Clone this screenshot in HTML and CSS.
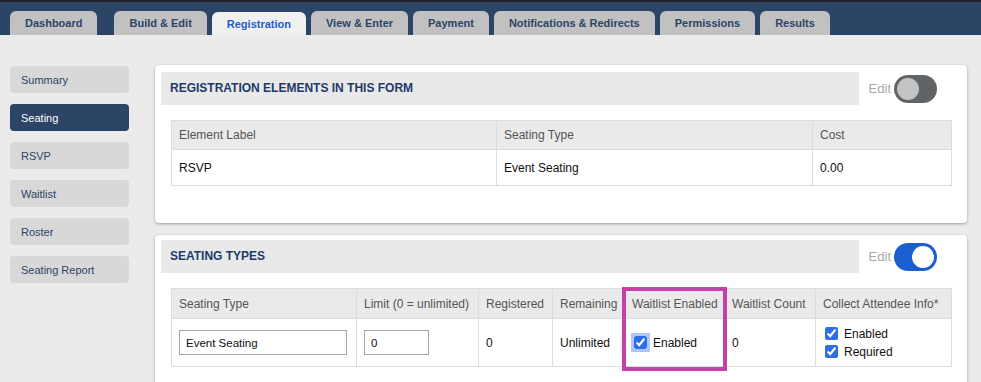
FILE: index.html
```html
<!DOCTYPE html>
<html lang="en">
<head>
    <meta charset="UTF-8">
    <meta name="viewport" content="width=device-width, initial-scale=1.0">
    <title>Registration - Seating</title>
    <link rel="stylesheet" href="styles.css">
</head>
<body>
    <div class="topbar">
        <span class="tab first">Dashboard</span>
        <span class="tab">Build &amp; Edit</span>
        <span class="tab active">Registration</span>
        <span class="tab">View &amp; Enter</span>
        <span class="tab">Payment</span>
        <span class="tab">Notifications &amp; Redirects</span>
        <span class="tab">Permissions</span>
        <span class="tab">Results</span>
    </div>

    <div class="main">
        <div class="side_nav">
            <a class="side_item" href="javascript:;">Summary</a>
            <a class="side_item active" href="javascript:;">Seating</a>
            <a class="side_item" href="javascript:;">RSVP</a>
            <a class="side_item" href="javascript:;">Waitlist</a>
            <a class="side_item" href="javascript:;">Roster</a>
            <a class="side_item" href="javascript:;">Seating Report</a>
        </div>

        <div class="content">
            <!-- 表单里的报名元素 -->
            <div class="card">
                <div class="card_head">
                    <div class="card_title">REGISTRATION ELEMENTS IN THIS FORM</div>
                    <span class="edit">Edit</span>
                    <span class="toggle"><span class="knob"></span></span>
                </div>
                <div class="card_body">
                    <table class="grid elements">
                        <colgroup>
                            <col style="width: 325px">
                            <col style="width: 316px">
                            <col style="width: 139px">
                        </colgroup>
                        <tr>
                            <th>Element Label</th>
                            <th>Seating Type</th>
                            <th>Cost</th>
                        </tr>
                        <tr>
                            <td>RSVP</td>
                            <td>Event Seating</td>
                            <td>0.00</td>
                        </tr>
                    </table>
                </div>
            </div>

            <!-- 座位类型 -->
            <div class="card">
                <div class="card_head tight">
                    <div class="card_title">SEATING TYPES</div>
                    <span class="edit">Edit</span>
                    <span class="toggle on"><span class="knob"></span></span>
                </div>
                <div class="card_body">
                    <div class="table_wrap">
                        <table class="grid seating">
                            <colgroup>
                                <col style="width: 185px">
                                <col style="width: 122px">
                                <col style="width: 74px">
                                <col style="width: 72px">
                                <col style="width: 100px">
                                <col style="width: 91px">
                                <col style="width: 136px">
                            </colgroup>
                            <tr>
                                <th>Seating Type</th>
                                <th>Limit (0 = unlimited)</th>
                                <th>Registered</th>
                                <th>Remaining</th>
                                <th>Waitlist Enabled</th>
                                <th>Waitlist Count</th>
                                <th>Collect Attendee Info*</th>
                            </tr>
                            <tr>
                                <td><input class="text_input name" type="text" value="Event Seating"></td>
                                <td><input class="text_input limit" type="text" value="0"></td>
                                <td>0</td>
                                <td>Unlimited</td>
                                <td>
                                    <label class="check">
                                        <input class="focused" type="checkbox" checked> Enabled
                                    </label>
                                </td>
                                <td>0</td>
                                <td class="collect">
                                    <label class="check"><input type="checkbox" checked> Enabled</label>
                                    <label class="check"><input type="checkbox" checked> Required</label>
                                </td>
                            </tr>
                        </table>
                        <span class="highlight"></span>
                    </div>
                </div>
            </div>
        </div>
    </div>
</body>
</html>
```

FILE: styles.css
```css
*{
    margin: 0;
    padding: 0;
    box-sizing: border-box;
}

html, body{
    overflow: hidden;
}

body{
    background-color: #ebebeb;
    font-family: "Liberation Sans", Arial, sans-serif;
    color: #111;
}

/* 顶部标签栏 */
.topbar{
    display: flex;
    align-items: flex-end;
    gap: 5px;
    height: 35px;
    padding-left: 10px;
    border-top: 2px solid #1f2226;
    background-color: #2c4466;
}

.topbar .tab{
    height: 24px;
    padding: 1px 15px 0;
    border-radius: 6px 6px 0 0;
    background-color: #c1c1c1;
    color: #2c4466;
    font-size: 11px;
    font-weight: bold;
    line-height: 23px;
    white-space: nowrap;
}

.topbar .tab.first{
    margin-right: 12px;
}

.topbar .tab.active{
    height: 23px;
    background-color: #f0f0f0;
    color: #1b5fcf;
}

.main{
    display: flex;
    gap: 26px;
    padding: 30px 14px 0 10px;
}

/* 左侧菜单 */
.side_nav{
    display: flex;
    flex-direction: column;
    gap: 11px;
    width: 120px;
    padding-top: 1px;
}

.side_item{
    display: block;
    height: 27px;
    padding-left: 11px;
    border-radius: 4px;
    background-color: #d8d8d8;
    color: #2c4466;
    font-size: 11px;
    line-height: 28px;
    text-decoration: none;
}

.side_item.active{
    background-color: #2c4466;
    color: #fff;
}

.content{
    flex: 1;
    display: flex;
    flex-direction: column;
    gap: 12px;
}

/* 卡片 */
.card{
    border-radius: 4px;
    background-color: #fff;
    box-shadow: 0 1px 3px rgba(0, 0, 0, 0.35);
}

.card_head{
    display: flex;
    align-items: center;
    padding: 7px 30px 0 6px;
}

.card_head.tight{
    padding-top: 5px;
}

.card_title{
    flex: 1;
    height: 33px;
    padding-left: 9px;
    background-color: #e9e9e9;
    color: #1d3a6b;
    font-size: 12px;
    font-weight: bold;
    line-height: 33px;
}

.edit{
    margin: 0 3px 0 10px;
    color: #a9a9a9;
    font-size: 13px;
}

.toggle{
    position: relative;
    display: flex;
    align-items: center;
    width: 43px;
    height: 28px;
    padding: 0 3px;
    border-radius: 14px;
    background-color: #616466;
}

.toggle .knob{
    width: 22px;
    height: 22px;
    border-radius: 50%;
    background-color: #c3c3c3;
}

.toggle.on{
    justify-content: flex-end;
    background-color: #1b5fcf;
}

.toggle.on .knob{
    background-color: #fff;
}

.card_body{
    padding: 15px 15px 37px 16px;
}

/* 表格 */
.grid{
    width: 100%;
    table-layout: fixed;
    border-collapse: collapse;
    border: 1px solid #dcdcdc;
    font-size: 12px;
}

.grid th{
    height: 29px;
    padding: 0 7px;
    border: 1px solid #dcdcdc;
    background-color: #eaeaea;
    color: #555;
    font-weight: normal;
    text-align: left;
    white-space: nowrap;
}

.grid td{
    height: 36px;
    padding: 0 7px;
    border: 1px solid #dcdcdc;
    white-space: nowrap;
}

.seating th{
    height: 30px;
}

.seating td{
    height: 48px;
}

.text_input{
    height: 25px;
    padding: 0 6px;
    border: 1px solid #a5a5a5;
    font-family: inherit;
    font-size: 11.5px;
    color: #111;
}

.text_input.name{
    width: 168px;
}

.text_input.limit{
    width: 65px;
}

.check{
    display: flex;
    align-items: center;
    gap: 6px;
}

.check input{
    width: 13px;
    height: 13px;
    margin: 0 0 0 2px;
    accent-color: #2f6ee6;
}

.check input.focused{
    outline: 3px solid rgba(70, 130, 240, 0.45);
    outline-offset: 0;
    border-radius: 4px;
}

.collect{
    padding-left: 7px;
}

.collect .check{
    height: 18px;
}

.table_wrap{
    position: relative;
}

/* 标注框 */
.highlight{
    position: absolute;
    left: 451px;
    top: -1px;
    width: 105px;
    height: 84px;
    border: 4px solid #c641a6;
}
```
